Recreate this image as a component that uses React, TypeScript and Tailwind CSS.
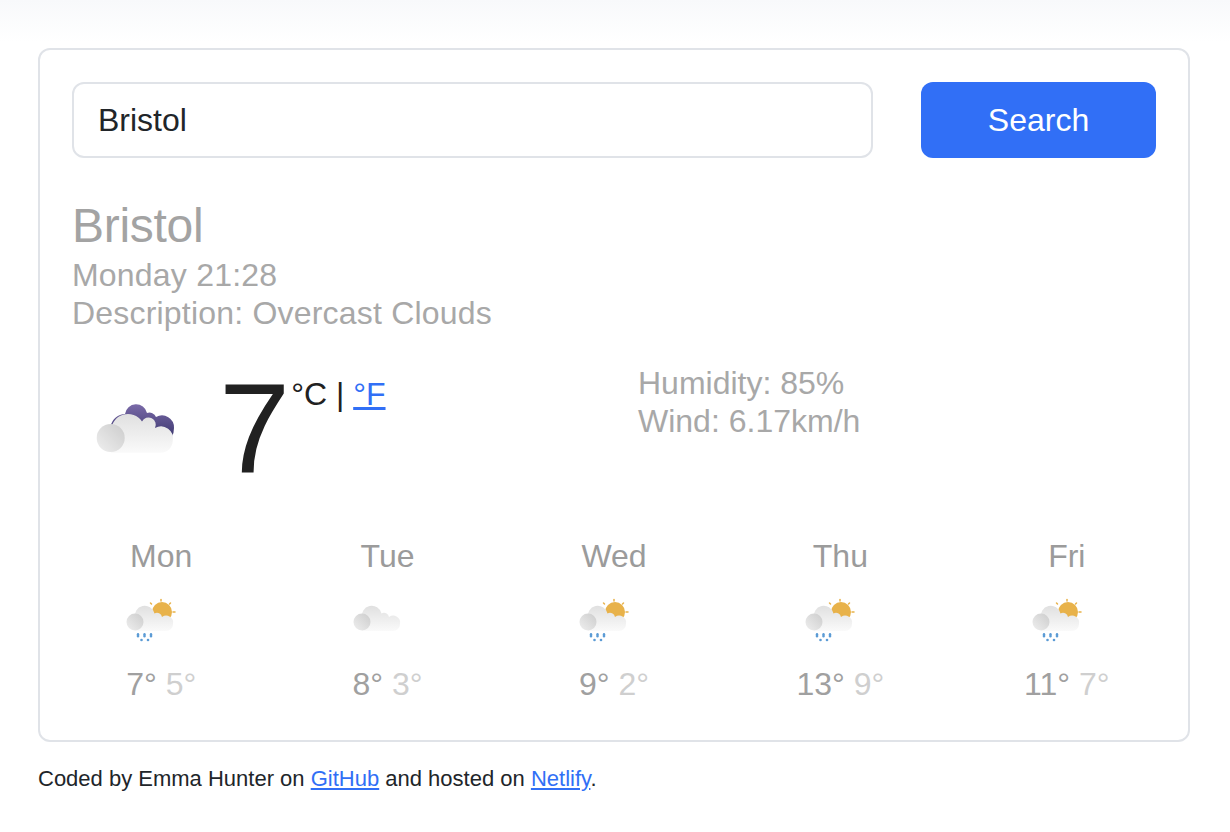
type IconKind = "rain" | "cloud";

const forecast: { day: string; high: number; low: number; icon: IconKind }[] = [
  { day: "Mon", high: 7, low: 5, icon: "rain" },
  { day: "Tue", high: 8, low: 3, icon: "cloud" },
  { day: "Wed", high: 9, low: 2, icon: "rain" },
  { day: "Thu", high: 13, low: 9, icon: "rain" },
  { day: "Fri", high: 11, low: 7, icon: "rain" },
];

function Defs() {
  return (
    <defs>
      <linearGradient id="cloudBody" x1="0" y1="0" x2="0" y2="1">
        <stop offset="0" stopColor="#e0e0e0" />
        <stop offset="1" stopColor="#fafafa" />
      </linearGradient>
      <linearGradient id="cloudBall" x1="1" y1="0" x2="0" y2="1">
        <stop offset="0" stopColor="#cccccc" />
        <stop offset="1" stopColor="#efefef" />
      </linearGradient>
      <linearGradient id="cloudDark" x1="0" y1="0" x2="0" y2="1">
        <stop offset="0" stopColor="#7a6aa8" />
        <stop offset="1" stopColor="#3f3a72" />
      </linearGradient>
    </defs>
  );
}

function OvercastIcon() {
  return (
    <svg width="82" height="56" viewBox="0 0 82 56" className="block">
      <Defs />
      <path
        d="M15.700 26 A15 15 0 0 1 30 14 A11.200 11.200 0 0 1 52 13 A7 7 0 0 1 61 17 A12 12 0 0 1 79 28 Q79 33 77 36 L30 36 Z"
        fill="url(#cloudDark)"
      />
      <path
        d="M16 52.700 V31 A17 17 0 0 1 47 21.400 A7 7 0 0 1 60 28 A12 12 0 0 1 77.700 41 A12 12 0 0 1 66 52.700 Z"
        fill="url(#cloudBody)"
      />
      <circle cx="15.700" cy="38" r="14" fill="url(#cloudBall)" />
    </svg>
  );
}

function ForecastIcon({ kind }: { kind: IconKind }) {
  return (
    <svg width="50" height="46" viewBox="0 0 50 46" className="block">
      <Defs />
      {kind === "rain" && (
        <>
          <circle cx="36" cy="14" r="10" fill="#e8b24a" />
          <g stroke="#e8b24a" strokeWidth="1.500" strokeLinecap="round">
            <path d="M35 1.500 V3" />
            <path d="M24.500 5 L25.500 6" />
            <path d="M44.500 5 L43.500 6" />
            <path d="M47 14 H49" />
          </g>
        </>
      )}
      <path
        d="M9 33 V20 A10 10 0 0 1 28.500 15.500 A5 5 0 0 1 36 19 A7 7 0 0 1 47 26 A7 7 0 0 1 40 33 Z"
        fill="url(#cloudBody)"
      />
      <circle cx="9" cy="24" r="8.500" fill="url(#cloudBall)" />
      {kind === "rain" && (
        <g fill="#5b9bd5">
          <rect x="10.800" y="35" width="2.400" height="4.500" rx="1.200" />
          <rect x="17.300" y="35" width="2.400" height="4.500" rx="1.200" />
          <rect x="23.800" y="35" width="2.400" height="4.500" rx="1.200" />
          <circle cx="15.500" cy="42" r="1.300" />
          <circle cx="22" cy="42" r="1.300" />
        </g>
      )}
    </svg>
  );
}

export default function App() {
  return (
    <div className="min-h-[832px] bg-white font-['Liberation_Sans',Arial,sans-serif] text-[#212529]">
      <div className="h-[42px] bg-gradient-to-b from-[#f8f9fb] to-white" />
      <div className="pl-[38px] pr-[40px] pt-[6px]">
        <div className="h-[694px] rounded-[12px] border-2 border-[#e0e3e8] p-8">
          <div className="flex gap-12">
            <input
              readOnly
              value="Bristol"
              className="h-[76px] min-w-0 flex-1 rounded-[12px] border-2 border-[#e0e3e8] bg-white px-6 text-[32px] text-[#212529] outline-none"
            />
            <button className="h-[76px] w-[235px] rounded-[12px] bg-[#316ff6] text-[32px] text-white">
              Search
            </button>
          </div>

          <h1 className="mt-[37px] text-[48px] leading-[61px] tracking-[-0.3px] text-[#a3a3a3]">Bristol</h1>
          <p className="text-[32px] leading-[38px] tracking-[0.2px] text-[#a8a8a8]">Monday 21:28</p>
          <p className="text-[32px] leading-[38px] tracking-[0.2px] text-[#a8a8a8]">Description: Overcast Clouds</p>

          <div className="-mx-6 mt-[32px] grid grid-cols-2">
            <div className="flex px-6">
              <div className="ml-[23px] mt-[36px]">
                <OvercastIcon />
              </div>
              <span className="ml-[42px] mt-[-10px] h-[152px] text-[128px] leading-[150px] text-[#212121]">7</span>
              <span className="ml-px mt-[11px] text-[32px] leading-[38px] text-[#212121]">
                °C | <a href="#" className="text-[#316ff6] underline">°F</a>
              </span>
            </div>
            <div className="px-6 text-[32px] leading-[38px] text-[#a8a8a8]">
              <p>Humidity: 85%</p>
              <p>Wind: 6.17km/h</p>
            </div>
          </div>

          <div className="-mx-6 mt-[28px] grid grid-cols-5">
            {forecast.map((item) => (
              <div key={item.day} className="flex flex-col items-center">
                <div className="text-[32px] leading-[44px] text-[#9b9b9b]">{item.day}</div>
                <div className="mr-[20px] mt-[20px]">
                  <ForecastIcon kind={item.icon} />
                </div>
                <div className="mt-[18px] text-[32px] leading-[44px]">
                  <span className="text-[#a0a0a0]">{item.high}°</span>{" "}
                  <span className="text-[#cfcfcf]">{item.low}°</span>
                </div>
              </div>
            ))}
          </div>
        </div>
        <p className="mt-[22px] text-[22px] leading-[30px] text-[#212529]">
          Coded by Emma Hunter on <a href="#" className="text-[#316ff6] underline">GitHub</a> and hosted on{" "}
          <a href="#" className="text-[#316ff6] underline">Netlify</a>.
        </p>
      </div>
    </div>
  );
}
